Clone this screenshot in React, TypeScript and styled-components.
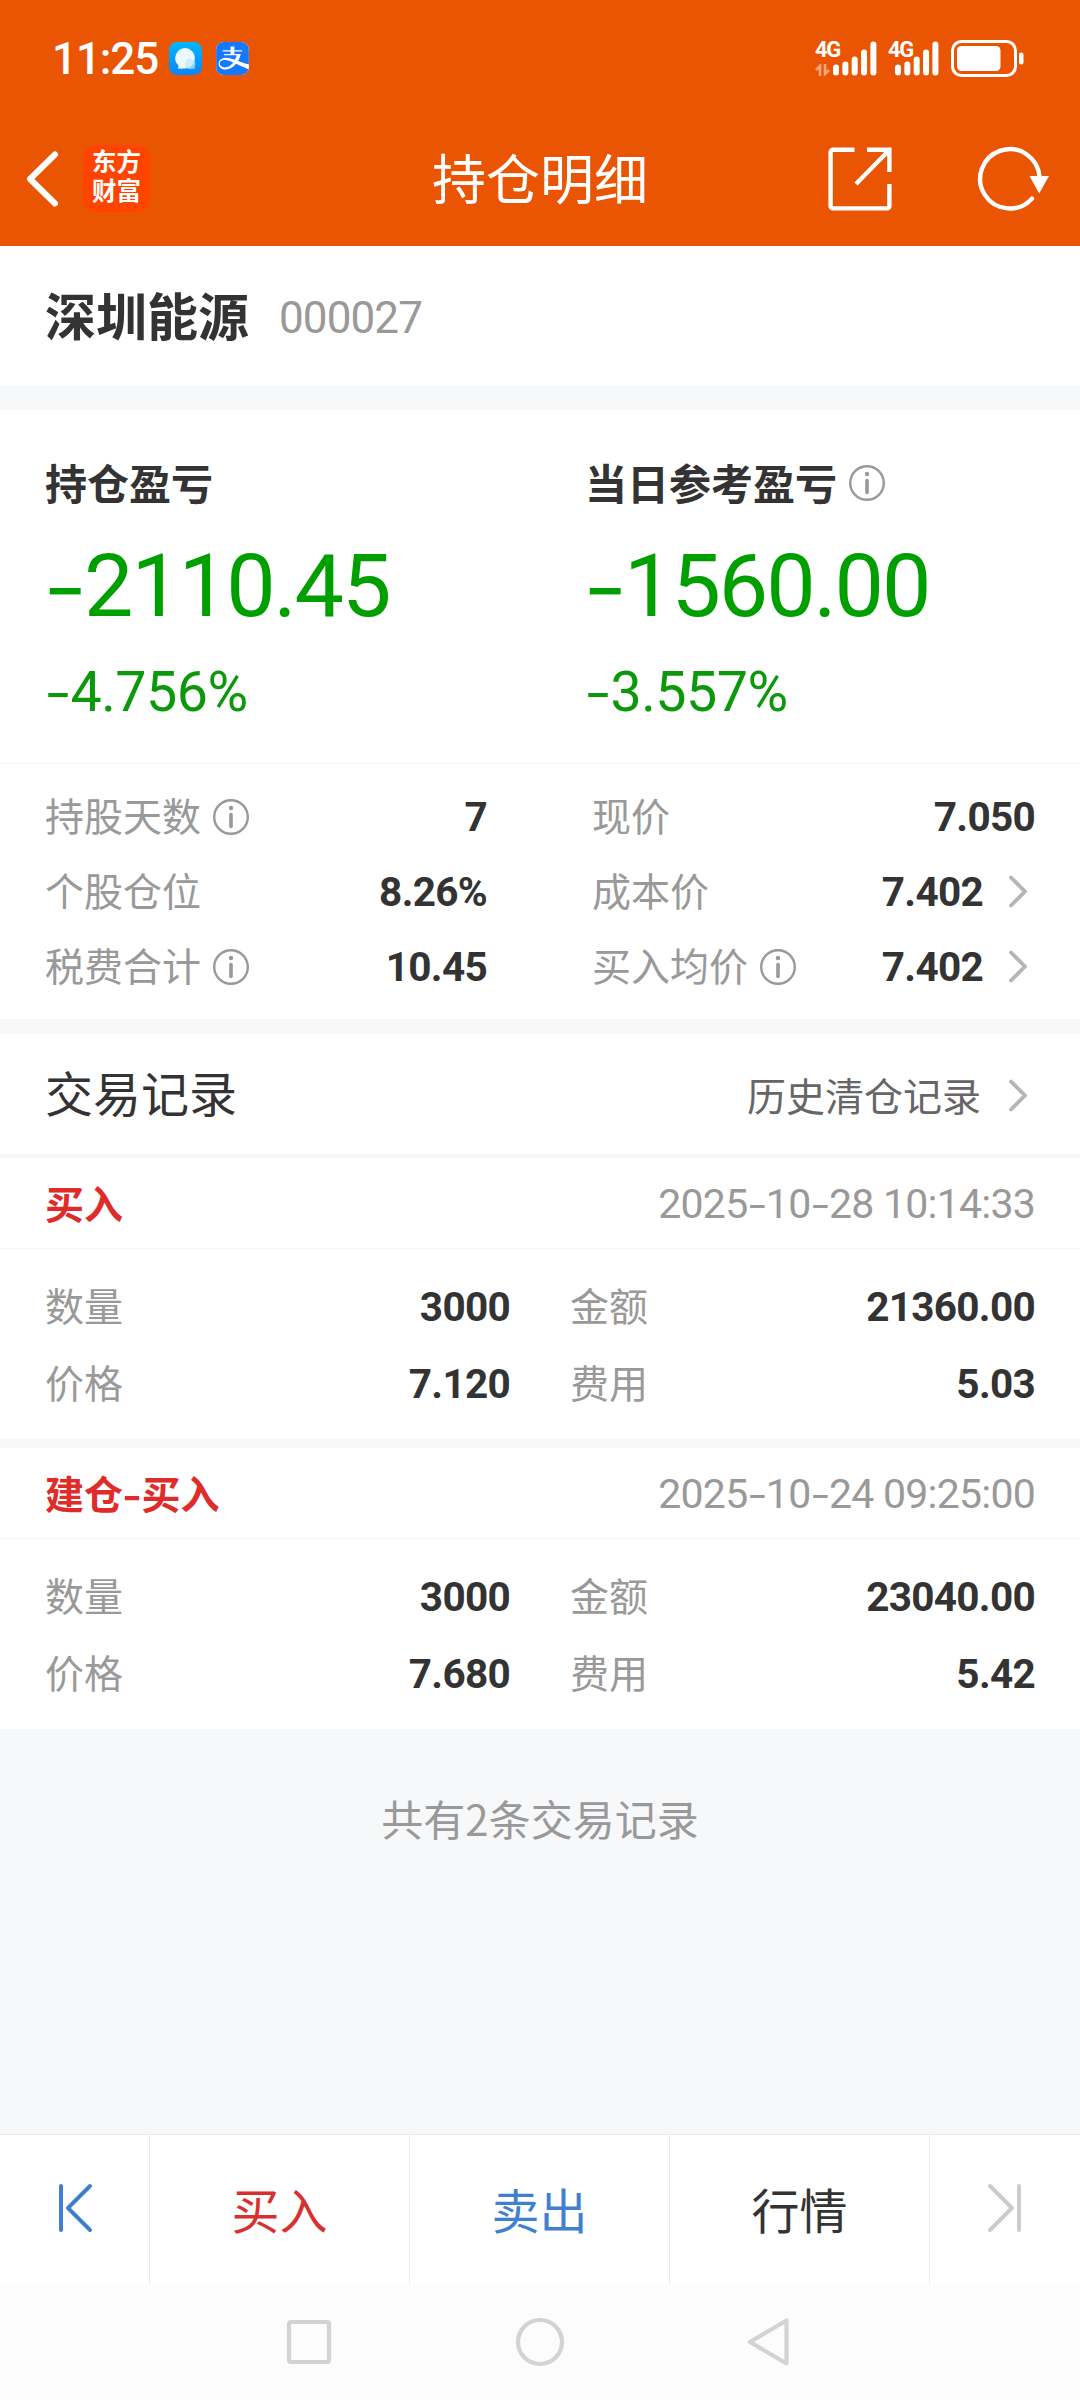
import React from "react";
import styled, { createGlobalStyle } from "styled-components";
import { SiAlipay } from "react-icons/si";

const GlobalStyle = createGlobalStyle`
  * { box-sizing: border-box; }
  html, body { margin: 0; padding: 0; background: #f7f8fa; }
`;

const cjk = `"Noto Sans CJK SC", sans-serif`;
const digits = `Roboto, "Noto Sans CJK SC", sans-serif`;

const Page = styled.div`
  width: 1080px;
  height: 2400px;
  display: flex;
  flex-direction: column;
  background: #f7f8fa;
  font-family: ${cjk};
  color: #333;
  overflow: hidden;
`;

const Header = styled.header`
  height: 246px;
  flex: none;
  background: #ea5504;
  color: #fff;
  display: flex;
  flex-direction: column;
`;

const StatusBar = styled.div`
  height: 111px;
  display: flex;
  align-items: center;
  padding: 5px 56px 0 52px;
`;

const Clock = styled.span`
  width: 117px;
  padding-top: 1px;
  font: 500 44px/50px ${digits};
  letter-spacing: -1.1px;
  white-space: nowrap;
`;

const MessageIcon = styled.svg`
  width: 33px;
  height: 33px;
  margin-right: 14px;
`;

const AlipayBadge = styled.span`
  width: 33px;
  height: 33px;
  border-radius: 8px;
  overflow: hidden;
  background: #fff;
  color: #1677ff;
  display: flex;
  svg { width: 33px; height: 33px; }
`;

const Signal = styled.div<{ $second?: boolean }>`
  display: flex;
  align-items: flex-end;
  height: 36px;
  margin-left: ${(p) => (p.$second ? "11px" : "auto")};
`;

const SignalLabel = styled.div<{ $width: number }>`
  width: ${(p) => p.$width}px;
  height: 36px;
  display: flex;
  flex-direction: column;
  justify-content: space-between;
  font: 700 22px/19px ${digits};
  letter-spacing: -1.4px;
  white-space: nowrap;
  svg { width: 15px; height: 12px; }
`;

const Bars = styled.svg`
  width: 44px;
  height: 36px;
`;

const Battery = styled.svg`
  width: 73px;
  height: 37px;
  margin-left: 12px;
`;

const NavRow = styled.div`
  height: 135px;
  display: grid;
  grid-template-columns: 1fr auto 1fr;
  align-items: center;
`;

const NavLeft = styled.div`
  display: flex;
  align-items: center;
  padding-left: 25px;
  gap: 24px;
`;

const NavRight = styled.div`
  display: flex;
  align-items: center;
  justify-content: flex-end;
  padding-right: 31px;
  gap: 85px;
`;

const BackIcon = styled.svg`
  width: 34px;
  height: 58px;
`;

const Logo = styled.div`
  width: 67px;
  height: 67px;
  border-radius: 14px;
  background: #ff4400;
  font: 700 24.5px/29px "Liberation Sans", ${cjk};
  text-align: center;
  padding: 3px 0;
`;

const Title = styled.h1`
  margin: 0;
  padding-bottom: 3px;
  font: 400 54px/70px ${cjk};
`;

const ShareIcon = styled.svg`
  width: 64px;
  height: 64px;
`;

const RefreshIcon = styled.svg`
  width: 72px;
  height: 66px;
`;

const StockBar = styled.section`
  height: 140px;
  flex: none;
  background: #fff;
  display: flex;
  align-items: center;
  padding: 0 45px;
  gap: 30px;
`;

const StockName = styled.h2`
  margin: 0;
  padding-bottom: 4px;
  font: 700 51px/70px ${cjk};
`;

const StockCode = styled.span`
  padding-top: 3px;
  font: 400 44px/60px ${digits};
  letter-spacing: -0.9px;
  color: #999;
`;

const Profit = styled.section`
  margin-top: 24px;
  height: 354px;
  flex: none;
  background: #fff;
  border-bottom: 1px solid #f4f4f5;
  display: grid;
  grid-template-columns: 1fr 1fr;
`;

const ProfitColumn = styled.div`
  padding: 43px 0 0 45px;
  display: flex;
  flex-direction: column;
`;

const ProfitLabel = styled.div`
  display: flex;
  align-items: center;
  gap: 12px;
  height: 60px;
`;

const ProfitName = styled.span`
  padding-bottom: 3px;
  font: 700 42px/60px ${cjk};
`;

const ProfitAmount = styled.div`
  margin-top: 20px;
  font: 400 88px/106px ${digits};
  letter-spacing: -2.1px;
  color: #009f00;
  white-space: nowrap;
`;

const ProfitRate = styled.div`
  margin-top: 19px;
  font: 400 55.5px/70px ${digits};
  letter-spacing: -0.5px;
  color: #0b990b;
  white-space: nowrap;
`;

const HyphenGlyph = styled.span`
  display: inline-block;
  font-family: Inter, sans-serif;
  font-size: 0.9em;
  line-height: 1;
  transform: scaleX(1.22);
  transform-origin: 0 50%;
  margin: 0 0.08em 0 -0.02em;
`;

const InfoSvg = styled.svg`
  width: 36px;
  height: 36px;
  flex: none;
`;

const Stats = styled.section`
  height: 255px;
  flex: none;
  background: #fff;
  padding: 15px 45px 0;
  display: grid;
  grid-template-columns: 442px 443px;
  grid-auto-rows: 75px;
  justify-content: space-between;
`;

const Pair = styled.div`
  display: flex;
  align-items: center;
`;

const PairLabel = styled.span`
  display: flex;
  align-items: center;
  gap: 12px;
  color: #999;
`;

const LabelText = styled.span`
  padding-bottom: 5px;
  font: 400 39px/56px ${cjk};
`;

const PairValue = styled.span`
  margin-left: auto;
  font: 700 40.5px/56px ${digits};
  letter-spacing: -0.7px;
  color: #333;
`;

const Chevron = styled.svg`
  width: 20px;
  height: 34px;
  margin: 0 7px 0 25px;
`;

const TradeHeader = styled.section`
  margin-top: 15px;
  height: 124px;
  flex: none;
  background: #fff;
  border-bottom: 4px solid #f7f7f8;
  display: flex;
  align-items: center;
  padding: 0 45px;
`;

const TradeTitle = styled.h3`
  margin: 0;
  padding-bottom: 6px;
  font: 400 48px/70px ${cjk};
`;

const HistoryLink = styled.a`
  margin-left: auto;
  padding-top: 4px;
  display: flex;
  align-items: center;
  gap: 2px;
  color: #666;
`;

const Record = styled.article`
  height: 281px;
  flex: none;
  background: #fff;
  & + & { margin-top: 9px; }
`;

const RecordHead = styled.div`
  height: 91px;
  border-bottom: 1px solid #f3f4f5;
  display: flex;
  align-items: center;
  justify-content: space-between;
  padding: 0 45px;
`;

const RecordKind = styled.span`
  padding-bottom: 3px;
  font: 700 39px/56px ${cjk};
  color: #e02b2b;
  white-space: nowrap;
`;

const RecordTime = styled.time`
  padding-top: 2px;
  font: 400 41px/56px ${digits};
  letter-spacing: -0.75px;
  color: #999;
  white-space: nowrap;
`;

const RecordBody = styled.div`
  padding: 19px 45px 0;
  display: grid;
  grid-template-columns: 465px 465px;
  column-gap: 60px;
  grid-auto-rows: 77px;
  justify-content: space-between;
`;

const Summary = styled.p`
  margin: 59px 0 0;
  text-align: center;
  font: 400 42px/60px ${cjk};
  color: #999;
`;

const ActionBar = styled.nav`
  margin-top: auto;
  height: 150px;
  flex: none;
  background: #fff;
  border-top: 1px solid #ebebeb;
  display: grid;
  grid-template-columns: 150px 1fr 1fr 1fr 150px;
`;

const Action = styled.button<{ $color?: string }>`
  border: 0;
  background: none;
  padding: 0 0 4px;
  display: flex;
  align-items: center;
  justify-content: center;
  font: 400 48px/70px ${cjk};
  color: ${(p) => p.$color || "#333"};
  &:not(:last-child) { border-right: 1px solid #ebebeb; }
`;

const StepIcon = styled.svg`
  width: 36px;
  height: 50px;
`;

const SystemBar = styled.footer`
  height: 116px;
  flex: none;
  background: #fcfcfc;
  display: flex;
  justify-content: center;
  align-items: center;
  gap: 181px;
  svg { width: 50px; height: 50px; }
`;

/* The hyphen is set wider than the digits' own one. */
const Figure = ({ text }: { text: string }) => (
  <>
    {text.split(/(-)/).map((part, i) =>
      part === "-" ? <HyphenGlyph key={i}>-</HyphenGlyph> : part
    )}
  </>
);

const Info = () => (
  <InfoSvg viewBox="0 0 36 36" fill="none" stroke="#999">
    <circle cx="18" cy="18" r="16.8" strokeWidth="2.4" />
    <path d="M18 15.5V27.5" strokeWidth="3.6" strokeLinecap="round" />
    <circle cx="18" cy="9" r="2.2" fill="#999" stroke="none" />
  </InfoSvg>
);

const Arrow = () => (
  <Chevron viewBox="0 0 20 34" fill="none" stroke="#b5b5b5" strokeWidth="3.8" strokeLinecap="round" strokeLinejoin="round">
    <path d="M3 2.5 17 16.5 3 30.5" />
  </Chevron>
);

const SignalBars = () => (
  <Bars viewBox="0 0 44 36" fill="#fff">
    {[11, 14, 19, 26, 34].map((h, i) => (
      <rect key={i} x={i * 9.35} y={35.5 - h} width="6" height={h} rx="3" />
    ))}
  </Bars>
);

type Row = { label: string; value: string; info?: boolean; link?: boolean };

const stats: Row[] = [
  { label: "持股天数", value: "7", info: true },
  { label: "现价", value: "7.050" },
  { label: "个股仓位", value: "8.26%" },
  { label: "成本价", value: "7.402", link: true },
  { label: "税费合计", value: "10.45", info: true },
  { label: "买入均价", value: "7.402", info: true, link: true },
];

const records = [
  {
    kind: "买入",
    time: "2025-10-28 10:14:33",
    rows: [
      { label: "数量", value: "3000" },
      { label: "金额", value: "21360.00" },
      { label: "价格", value: "7.120" },
      { label: "费用", value: "5.03" },
    ],
  },
  {
    kind: "建仓-买入",
    time: "2025-10-24 09:25:00",
    rows: [
      { label: "数量", value: "3000" },
      { label: "金额", value: "23040.00" },
      { label: "价格", value: "7.680" },
      { label: "费用", value: "5.42" },
    ],
  },
];

const DataPair = ({ label, value, info, link }: Row) => (
  <Pair>
    <PairLabel>
      <LabelText>{label}</LabelText>
      {info && <Info />}
    </PairLabel>
    <PairValue>{value}</PairValue>
    {link && <Arrow />}
  </Pair>
);

export default function App() {
  return (
    <Page>
      <GlobalStyle />
      <Header>
        <StatusBar>
          <Clock>11:25</Clock>
          <MessageIcon viewBox="0 0 33 33">
            <defs>
              <linearGradient id="msg" x1="0" y1="0" x2="0" y2="1">
                <stop offset="0" stopColor="#00b7ff" />
                <stop offset="1" stopColor="#0a84ff" />
              </linearGradient>
            </defs>
            <rect width="33" height="33" rx="8" fill="url(#msg)" />
            <path d="M15.500 6a10.300 10.300 0 1 1-2 20.400c-1.600.4-3.200.3-5-.2 1-.8 1.200-1.700.9-2.600A10.300 10.300 0 0 1 15.500 6z" fill="#eef8ff" />
            <path d="M20.500 16.500a5.300 5.300 0 0 1 5 8.200l.4 2.200-2.400-.5a5.300 5.300 0 1 1-3-9.900z" fill="#c5e8ff" opacity=".75" />
          </MessageIcon>
          <AlipayBadge>
            <SiAlipay />
          </AlipayBadge>
          <Signal>
            <SignalLabel $width={18}>
              4G
              <svg viewBox="0 0 15 12" fill="none" stroke="#f7a679" strokeWidth="2.6">
                <path d="M5 12V2L1 6M10 0V10L14 6" />
              </svg>
            </SignalLabel>
            <SignalBars />
          </Signal>
          <Signal $second>
            <SignalLabel $width={7}>4G</SignalLabel>
            <SignalBars />
          </Signal>
          <Battery viewBox="0 0 73 37" fill="#fff">
            <rect x="1.500" y="1.500" width="63" height="34" rx="9" fill="none" stroke="#fff" strokeWidth="3" />
            <rect x="6" y="6" width="43.500" height="25" rx="4.500" />
            <rect x="68" y="12.500" width="4.500" height="12" rx="2.200" />
          </Battery>
        </StatusBar>
        <NavRow>
          <NavLeft>
            <BackIcon viewBox="0 0 34 58" fill="none" stroke="#fff" strokeWidth="6" strokeLinecap="round" strokeLinejoin="round">
              <path d="M30 4.500 5 29 30 53.500" />
            </BackIcon>
            <Logo>
              东方
              <br />
              财富
            </Logo>
          </NavLeft>
          <Title>持仓明细</Title>
          <NavRight>
            <ShareIcon viewBox="0 0 64 64" fill="none" stroke="#fff" strokeWidth="4.400">
              <path d="M26.500 2.800H5a2.400 2.400 0 0 0-2.400 2.400V59a2.400 2.400 0 0 0 2.400 2.400H59A2.400 2.400 0 0 0 61.400 59V37" />
              <path d="M39 2.800H61.400V25M60.500 3.700 28 37" />
            </ShareIcon>
            <RefreshIcon viewBox="0 0 72 66" fill="none" stroke="#fff" strokeWidth="4.400">
              <path d="M62.500 31A29.700 29.700 0 1 0 55 52.600" strokeLinecap="round" />
              <path d="M52.500 30H72L62.200 47.500z" fill="#fff" stroke="none" />
            </RefreshIcon>
          </NavRight>
        </NavRow>
      </Header>

      <StockBar>
        <StockName>深圳能源</StockName>
        <StockCode>000027</StockCode>
      </StockBar>

      <Profit>
        <ProfitColumn>
          <ProfitLabel>
            <ProfitName>持仓盈亏</ProfitName>
          </ProfitLabel>
          <ProfitAmount><Figure text="-2110.45" /></ProfitAmount>
          <ProfitRate><Figure text="-4.756%" /></ProfitRate>
        </ProfitColumn>
        <ProfitColumn>
          <ProfitLabel>
            <ProfitName>当日参考盈亏</ProfitName>
            <Info />
          </ProfitLabel>
          <ProfitAmount><Figure text="-1560.00" /></ProfitAmount>
          <ProfitRate><Figure text="-3.557%" /></ProfitRate>
        </ProfitColumn>
      </Profit>

      <Stats>
        {stats.map((s) => (
          <DataPair key={s.label} {...s} />
        ))}
      </Stats>

      <TradeHeader>
        <TradeTitle>交易记录</TradeTitle>
        <HistoryLink>
          <LabelText>历史清仓记录</LabelText>
          <Arrow />
        </HistoryLink>
      </TradeHeader>

      {records.map((r) => (
        <Record key={r.time}>
          <RecordHead>
            <RecordKind><Figure text={r.kind} /></RecordKind>
            <RecordTime><Figure text={r.time} /></RecordTime>
          </RecordHead>
          <RecordBody>
            {r.rows.map((row) => (
              <DataPair key={row.label} {...row} />
            ))}
          </RecordBody>
        </Record>
      ))}

      <Summary>共有2条交易记录</Summary>

      <ActionBar>
        <Action $color="#3f7fcb">
          <StepIcon viewBox="0 0 36 50" fill="none" stroke="currentColor" strokeWidth="4" strokeLinecap="round" strokeLinejoin="round">
            <path d="M4 3V47M33 3 11 25 33 47" />
          </StepIcon>
        </Action>
        <Action $color="#d92f2f">买入</Action>
        <Action $color="#3f80cf">卖出</Action>
        <Action>行情</Action>
        <Action $color="#cccccc">
          <StepIcon viewBox="0 0 36 50" fill="none" stroke="currentColor" strokeWidth="4" strokeLinecap="round" strokeLinejoin="round">
            <path d="M32 3V47M3 3 25 25 3 47" />
          </StepIcon>
        </Action>
      </ActionBar>

      <SystemBar>
        <svg viewBox="0 0 50 50" fill="none" stroke="#d3d3d3" strokeWidth="4.200">
          <rect x="5" y="5" width="40" height="40" rx="2" />
        </svg>
        <svg viewBox="0 0 50 50" fill="none" stroke="#d3d3d3" strokeWidth="4.200">
          <circle cx="25" cy="25" r="22" />
        </svg>
        <svg viewBox="0 0 50 50" fill="none" stroke="#d3d3d3" strokeWidth="4.200" strokeLinejoin="round">
          <path d="M40.500 3.500V46.500L4 25z" />
        </svg>
      </SystemBar>
    </Page>
  );
}
